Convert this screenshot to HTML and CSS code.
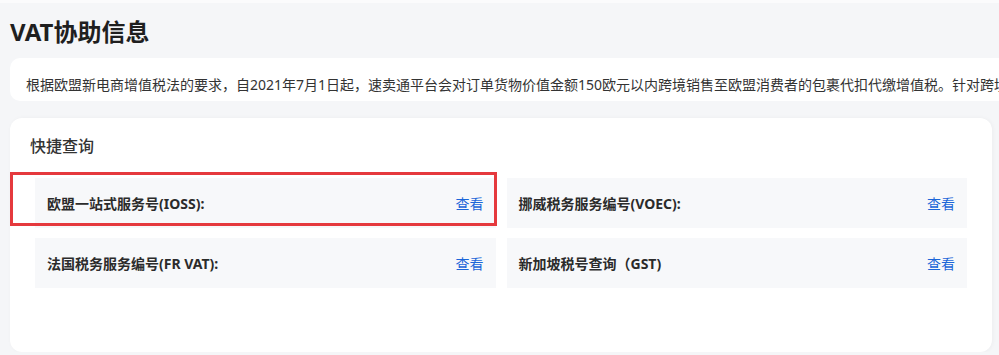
FILE: index.html
```html
<!DOCTYPE html>
<html lang="zh-CN">
<head>
  <meta charset="UTF-8">
  <meta name="viewport" content="width=device-width, initial-scale=1.0">
  <title>VAT协助信息</title>
  <link rel="stylesheet" href="styles.css">
</head>
<body>
  <div class="page">
    <h1 class="page-title">VAT协助信息</h1>

    <div class="notice">
      根据欧盟新电商增值税法的要求，自2021年7月1日起，速卖通平台会对订单货物价值金额150欧元以内跨境销售至欧盟消费者的包裹代扣代缴增值税。针对跨境电商卖家，平台将协助提供相关税号信息。
    </div>

    <div class="card">
      <h2 class="card-title">快捷查询</h2>

      <div class="query-grid">
        <div class="query-item">
          <span class="query-label">欧盟一站式服务号(IOSS):</span>
          <a class="query-link" href="#">查看</a>
        </div>
        <div class="query-item">
          <span class="query-label">挪威税务服务编号(VOEC):</span>
          <a class="query-link" href="#">查看</a>
        </div>
        <div class="query-item">
          <span class="query-label">法国税务服务编号(FR VAT):</span>
          <a class="query-link" href="#">查看</a>
        </div>
        <div class="query-item">
          <span class="query-label">新加坡税号查询（GST)</span>
          <a class="query-link" href="#">查看</a>
        </div>
      </div>

      <!-- highlight box drawn over the first item -->
      <div class="highlight"></div>
    </div>
  </div>
</body>
</html>
```

FILE: styles.css
```css
html, body {
  margin: 0;
  padding: 0;
}

body {
  background-color: #f5f6f8;
  font-family: "Noto Sans", "Noto Sans CJK SC", sans-serif;
  color: #333;
  overflow: hidden;
}

.page {
  border-top: 3px solid #fbfbfc;
  padding: 13px 7px 0 10px;
}

.page-title {
  margin: 0 0 10px;
  font-size: 24px;
  line-height: 32px;
  font-weight: 700;
  color: #1f1f1f;
}

.notice {
  width: max-content;
  padding: 16px 16px 5px 16px;
  background-color: #fff;
  border-radius: 10px;
  font-size: 14px;
  line-height: 22px;
  color: #333;
  white-space: nowrap;
  margin-bottom: 17px;
}

.card {
  position: relative;
  background-color: #fff;
  border-radius: 12px;
  padding: 16px 20px 64px;
  box-shadow: 1px 0 4px rgba(0, 0, 0, 0.04);
}

.card-title {
  margin: 0 0 20px;
  font-size: 16px;
  line-height: 24px;
  font-weight: 500;
  color: #333;
}

.query-grid {
  display: grid;
  grid-template-columns: 1fr 1fr;
  column-gap: 11px;
  row-gap: 10px;
  padding: 0 5px;
}

.query-item {
  display: flex;
  align-items: center;
  justify-content: space-between;
  height: 50px;
  padding: 0 12px;
  background-color: #f7f8fa;
  font-size: 14px;
}

.query-label {
  font-weight: 700;
  color: #2b2b2b;
}

.query-link {
  color: #1b66d8;
  text-decoration: none;
}

.highlight {
  position: absolute;
  left: 0;
  top: 54px;
  width: 487px;
  height: 54px;
  box-sizing: border-box;
  border: 3px solid #e5393d;
}
```
